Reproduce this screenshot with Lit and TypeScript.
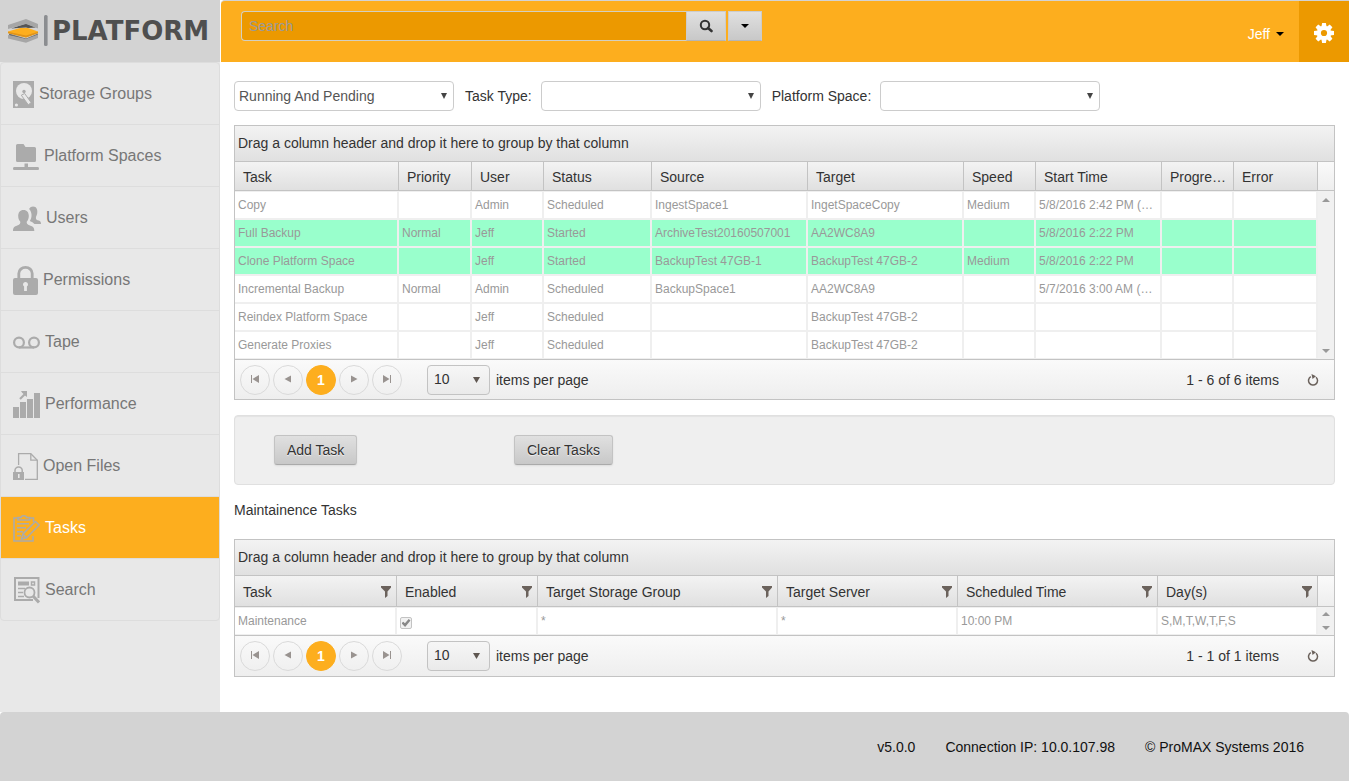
import { LitElement, html, svg, css, nothing } from "lit";
import { customElement, property } from "lit/decorators.js";
import { classMap } from "lit/directives/class-map.js";
import { styleMap } from "lit/directives/style-map.js";

interface NavItem {
  label: string;
  width: number;
  icon: unknown;
  active?: boolean;
}

interface Column {
  title: string;
  /** Width in pixels; the column without one takes the remaining space. */
  width?: number;
}

interface Row {
  cells: (string | boolean)[];
  running?: boolean;
}

const NAV: NavItem[] = [
  {
    label: "Storage Groups",
    width: 21,
    icon: svg`
      <rect x="0" y="3" width="21" height="27" fill="#ababab"/>
      <circle cx="11" cy="13" r="8" fill="#e8e8e8"/>
      <circle cx="11" cy="13.500" r="1.700" fill="#ababab"/>
      <path d="M8.300 17.200l3.400-1.700 6.300 8.900-2.600 2.600z" fill="#e8e8e8" stroke="#ababab" stroke-width="1"/>
      <circle cx="3.400" cy="27" r="1.600" fill="#e8e8e8"/>`,
  },
  {
    label: "Platform Spaces",
    width: 26,
    icon: svg`
      <path d="M3 5.500q0-1.500 1.500-1.500h6l2 3H21.500q1.500 0 1.500 1.500v12q0 1.500-1.500 1.500H4.500q-1.500 0-1.500-1.500z" fill="#ababab"/>
      <path d="M11.500 23.500h3.500v3.500h10q1 0 1 1.500t-1 1.500H1q-1 0-1-1.500T1 27h10.500z" fill="#ababab"/>`,
  },
  {
    label: "Users",
    width: 28,
    icon: svg`
      <path d="M16 7q1.500-2.400 4-2.400c3.800 0 4.800 3.400 4.200 7-.4 2-1.300 3-1.300 4.300 0 1.500 1 2 2.900 2.700 1.600.6 2.200 1.500 2.200 3.400h-6.500q-1.800-2.200-4.700-3c2.700-3.600 2.200-9.400-.8-12z" fill="#ababab"/>
      <path d="M10.500 8c3.600 0 5.300 2.600 5.300 6 0 2.600-.9 4.500-2 5.600-.4 2.100.2 2.900 3.200 3.900 2.900 1 4.300 1.900 4.300 5.500H0c0-3.600 1.300-4.500 4.200-5.500 2.900-1 3.400-1.800 3-3.900-1.200-1.200-2-3.100-2-5.600 0-3.400 1.700-6 5.300-6z" fill="#ababab"/>`,
  },
  {
    label: "Permissions",
    width: 25,
    icon: svg`
      <path d="M5.800 15V9.500a6.700 6.200 0 0 1 13.400 0V15" fill="none" stroke="#ababab" stroke-width="2.800"/>
      <rect x="0" y="14" width="25" height="17" rx="2" fill="#ababab"/>
      <path d="M12.500 18a2.500 2.500 0 0 1 1.400 4.600v4.400h-2.800v-4.400A2.500 2.500 0 0 1 12.500 18z" fill="#e8e8e8"/>`,
  },
  {
    label: "Tape",
    width: 27,
    icon: svg`
      <g fill="none" stroke="#ababab" stroke-width="2.200">
        <circle cx="6" cy="16.500" r="4.900"/>
        <circle cx="21" cy="16.500" r="4.900"/>
        <path d="M6 21.500h15"/>
      </g>`,
  },
  {
    label: "Performance",
    width: 27,
    icon: svg`
      <path d="M0 19h6v11H0zM7 14h6v16H7zM14 11h6v19h-6zM21 5h6v25h-6z" fill="#ababab"/>
      <path d="M7 11l5.500-5.500" fill="none" stroke="#ababab" stroke-width="2.200"/>
      <path d="M8 3h6v6l-2-1.500-3-3z" fill="#ababab"/>`,
  },
  {
    label: "Open Files",
    width: 25,
    icon: svg`
      <g fill="none" stroke="#ababab" stroke-width="1.300">
        <path d="M5.600 15V3.700h12.200l6.500 6.500v19.200H12"/>
        <path d="M17.800 3.700v6.500h6.500"/>
        <path d="M2 22.500v-2.200a3.600 3.300 0 0 1 7.200 0v2.200" stroke-width="1.500"/>
      </g>
      <rect x="0" y="22" width="11" height="8" fill="#ababab"/>
      <path d="M5 24h1.600v4H5z" fill="#e8e8e8"/>`,
  },
  {
    label: "Tasks",
    width: 27,
    active: true,
    icon: svg`
      <g fill="none" stroke="#ababab" stroke-width="1.600">
        <path d="M5 6H1v23h19v-5M16.500 6H20.500v4"/>
        <path d="M5 8V5.500h3q0-1.800 2.800-1.800t2.800 1.800h3V8z"/>
        <path d="M4 11.800h12M4 15.800h9M4 19.800h6M4 23.800h4"/>
        <path d="M8.500 27l1.500-5L22.500 9.500l3.700 3.500L13.500 25.700zM10 22l3.500 3.700"/>
      </g>`,
  },
  {
    label: "Search",
    width: 27,
    icon: svg`
      <path d="M20 26H2V4h23.500v20" fill="none" stroke="#ababab" stroke-width="2"/>
      <path d="M5 7.500h11v4H5z" fill="#ababab"/>
      <g fill="none" stroke="#ababab" stroke-width="1.500">
        <path d="M18.500 8h3v3h-3zM5 14.500h7M5 18.500h5M5 22.500h6"/>
        <circle cx="16.500" cy="18.500" r="5" stroke-width="1.800"/>
      </g>
      <path d="M20 22l6 6.500" stroke="#ababab" stroke-width="3"/>`,
  },
];

const TASK_COLUMNS: Column[] = [
  { title: "Task" },
  { title: "Priority", width: 73 },
  { title: "User", width: 72 },
  { title: "Status", width: 108 },
  { title: "Source", width: 156 },
  { title: "Target", width: 156 },
  { title: "Speed", width: 72 },
  { title: "Start Time", width: 126 },
  { title: "Progre…", width: 72 },
  { title: "Error", width: 84 },
];

const TASK_ROWS: Row[] = [
  { cells: ["Copy", "", "Admin", "Scheduled", "IngestSpace1", "IngetSpaceCopy", "Medium", "5/8/2016 2:42 PM (…", "", ""] },
  { cells: ["Full Backup", "Normal", "Jeff", "Started", "ArchiveTest20160507001", "AA2WC8A9", "", "5/8/2016 2:22 PM", "", ""], running: true },
  { cells: ["Clone Platform Space", "", "Jeff", "Started", "BackupTest 47GB-1", "BackupTest 47GB-2", "Medium", "5/8/2016 2:22 PM", "", ""], running: true },
  { cells: ["Incremental Backup", "Normal", "Admin", "Scheduled", "BackupSpace1", "AA2WC8A9", "", "5/7/2016 3:00 AM (…", "", ""] },
  { cells: ["Reindex Platform Space", "", "Jeff", "Scheduled", "", "BackupTest 47GB-2", "", "", "", ""] },
  { cells: ["Generate Proxies", "", "Jeff", "Scheduled", "", "BackupTest 47GB-2", "", "", "", ""] },
];

const MAINTENANCE_COLUMNS: Column[] = [
  { title: "Task", width: 162 },
  { title: "Enabled", width: 141 },
  { title: "Target Storage Group" },
  { title: "Target Server", width: 180 },
  { title: "Scheduled Time", width: 200 },
  { title: "Day(s)", width: 160 },
];

const MAINTENANCE_ROWS: Row[] = [
  { cells: ["Maintenance", true, "*", "*", "10:00 PM", "S,M,T,W,T,F,S"] },
];

const base = css`
  * {
    box-sizing: border-box;
  }
  button,
  input,
  select {
    font: inherit;
    margin: 0;
  }
  svg {
    display: block;
    flex: none;
  }
`;

@customElement("data-grid")
export class DataGrid extends LitElement {
  @property({ attribute: false }) columns: Column[] = [];
  @property({ attribute: false }) rows: Row[] = [];
  @property({ type: Boolean }) filterable = false;

  static styles = [
    base,
    css`
      :host {
        display: block;
        border: 1px solid #c3c3c3;
        color: #333;
      }
      .grouping {
        height: 36px;
        padding: 0 3px;
        line-height: 34px;
        border-bottom: 1px solid #c3c3c3;
        background: linear-gradient(#f3f3f3, #e0e0e0);
      }
      .content {
        display: grid;
        grid-template-columns: minmax(0, 1fr) 16px;
      }
      table {
        width: 100%;
        table-layout: fixed;
        border-collapse: separate;
        border-spacing: 0;
      }
      th,
      td {
        text-align: left;
        font-weight: normal;
        white-space: nowrap;
        overflow: hidden;
        text-overflow: ellipsis;
      }
      th {
        height: 29px;
        padding: 2px 4px 0 8px;
        border-right: 1px solid #c3c3c3;
        border-bottom: 1px solid #c3c3c3;
        background: linear-gradient(#f3f3f3, #e0e0e0);
      }
      .filterable th {
        height: 31px;
      }
      .heading {
        display: flex;
        align-items: center;
        justify-content: space-between;
      }
      .filter {
        border: 0;
        padding: 0;
        background: none;
      }
      td {
        height: 28px;
        padding: 0 3px;
        font-size: 12px;
        color: #999;
        background: #fff;
        border: solid #efefef;
        border-width: 1px 2px 1px 0;
      }
      .running td {
        background: #9fc;
      }
      .check {
        appearance: none;
        display: grid;
        place-items: center;
        width: 12px;
        height: 12px;
        margin-top: 4px;
        border: 1px solid #c3c3c3;
        border-radius: 2px;
        background: #f1f1f1;
      }
      .check:checked::before {
        content: "";
        width: 9px;
        height: 8px;
        background: #888;
        clip-path: polygon(0 52%, 20% 35%, 38% 52%, 80% 0, 100% 18%, 40% 100%);
      }
      .gutter {
        display: flex;
        flex-direction: column;
        background: #f1f1f1;
      }
      .cap {
        height: 29px;
        border-bottom: 1px solid #c3c3c3;
        background: linear-gradient(#fafafa, #eee);
      }
      .filterable .cap {
        height: 31px;
      }
      .track {
        flex: 1;
        contain: size;
        display: flex;
        flex-direction: column;
        justify-content: space-between;
      }
      .step {
        flex: 0 1 17px;
        min-height: 0;
        display: grid;
        place-items: center;
        padding: 0;
        border: 0;
        background: none;
      }
      .pager {
        display: flex;
        align-items: center;
        height: 40px;
        padding: 0 15px 0 5px;
        border-top: 1px solid #c3c3c3;
        background: linear-gradient(#fafafa, #eee);
      }
      .filterable + .pager {
        height: 41px;
      }
      .pages {
        display: flex;
        gap: 3px;
      }
      .page {
        display: grid;
        place-items: center;
        width: 30px;
        height: 30px;
        padding: 0;
        border: 1px solid #dadada;
        border-radius: 50%;
        background: none;
      }
      .current {
        border-color: #fdae1e;
        background: #fdae1e;
        color: #fff;
        font-weight: bold;
      }
      .size {
        display: flex;
        align-items: center;
        gap: 6px;
        margin-left: 25px;
      }
      .picker {
        display: grid;
        align-items: center;
        width: 63px;
      }
      .picker > * {
        grid-area: 1 / 1;
      }
      .picker svg {
        justify-self: end;
        margin-right: 10px;
        pointer-events: none;
      }
      .picker select {
        appearance: none;
        height: 30px;
        padding: 0 6px 2px;
        border: 1px solid #c3c3c3;
        border-radius: 4px;
        background: linear-gradient(#f6f6f6, #eaeaea);
        color: #333;
      }
      .summary {
        margin-left: auto;
      }
      .refresh {
        margin-left: 28px;
        padding: 0;
        border: 0;
        background: none;
      }
    `,
  ];

  private cell(value: string | boolean) {
    return typeof value === "boolean"
      ? html`<input class="check" type="checkbox" aria-label="Enabled" .checked=${value} disabled />`
      : value;
  }

  private pageButton(label: string, shape: string) {
    return html`<button class="page" aria-label=${label}>
      <svg width="10" height="12" viewBox="0 0 10 12"><path d=${shape} fill="#999390" /></svg>
    </button>`;
  }

  render() {
    const count = this.rows.length;
    return html`
      <div class="grouping">Drag a column header and drop it here to group by that column</div>
      <div class=${classMap({ content: true, filterable: this.filterable })}>
        <table>
          <colgroup>
            ${this.columns.map(
              (c) => html`<col style=${styleMap({ width: c.width ? `${c.width}px` : "auto" })} />`
            )}
          </colgroup>
          <thead>
            <tr>
              ${this.columns.map((c) =>
                this.filterable
                  ? html`<th scope="col">
                      <div class="heading">
                        ${c.title}
                        <button class="filter" aria-label="Filter ${c.title}">
                          <svg width="12" height="12" viewBox="0 0 12 12">
                            <path d="M1 0h10v1.500L7.500 5.500V10L5 12V5.500L1 1.500z" fill="#6b625c" />
                          </svg>
                        </button>
                      </div>
                    </th>`
                  : html`<th scope="col">${c.title}</th>`
              )}
            </tr>
          </thead>
          <tbody>
            ${this.rows.map(
              (r) => html`<tr class=${r.running ? "running" : nothing}>
                ${r.cells.map((v) => html`<td>${this.cell(v)}</td>`)}
              </tr>`
            )}
          </tbody>
        </table>
        <div class="gutter">
          <div class="cap"></div>
          <div class="track">
            <button class="step" aria-label="Scroll up">
              <svg width="8" height="4" viewBox="0 0 8 4"><path d="M0 4L4 0L8 4z" fill="#999" /></svg>
            </button>
            <button class="step" aria-label="Scroll down">
              <svg width="8" height="4" viewBox="0 0 8 4"><path d="M0 0L4 4L8 0z" fill="#999" /></svg>
            </button>
          </div>
        </div>
      </div>
      <div class="pager">
        <div class="pages">
          ${this.pageButton("First page", "M1 1h1v8H1zM9 1v8L2.500 5z")}
          ${this.pageButton("Previous page", "M8 1.500v7L1.500 5z")}
          <button class="page current">1</button>
          ${this.pageButton("Next page", "M2 1.500v7L8.500 5z")}
          ${this.pageButton("Last page", "M8 1h1v8H8zM1 1v8L7.500 5z")}
        </div>
        <label class="size">
          <span class="picker">
            <select>
              <option>10</option>
            </select>
            <svg width="8" height="6" viewBox="0 0 8 6"><path d="M1 0h7L4.500 6z" fill="#5f5751" /></svg>
          </span>
          items per page
        </label>
        <span class="summary">1 - ${count} of ${count} items</span>
        <button class="refresh" aria-label="Refresh">
          <svg width="12" height="12" viewBox="0 0 12 12">
            <path d="M9 3.200a4.500 4.500 0 1 1-5.200-.5" fill="none" stroke="#6b625c" stroke-width="1.500" />
            <path d="M4.500 0l4.500 2.200L5.500 5z" fill="#6b625c" />
          </svg>
        </button>
      </div>
    `;
  }
}

@customElement("app-root")
export class AppRoot extends LitElement {
  static styles = [
    base,
    css`
      :host {
        display: flex;
        flex-direction: column;
        min-height: 100vh;
        background: #fff;
        color: #333;
        font: 14px/20px "Liberation Sans", Arial, sans-serif;
      }
      .shell {
        flex: 1;
        display: grid;
        grid-template-columns: 220px minmax(0, 1fr);
        grid-template-rows: auto 1fr;
      }
      .brand {
        display: flex;
        align-items: center;
        gap: 4px;
        height: 62px;
        padding-left: 8px;
        background: #d3d3d3;
        color: #4f4f4f;
        font: bold 26px/30px "DejaVu Sans", sans-serif;
      }
      .topbar {
        display: flex;
        align-items: stretch;
        height: 62px;
        margin-left: 1px;
        padding-left: 20px;
        border-top: 1px solid #d3d3d3;
        border-top-left-radius: 4px;
        background: #fdae1e;
      }
      .search {
        display: flex;
        width: 521px;
        height: 30px;
        margin-top: 10px;
      }
      .search input {
        flex: 1;
        min-width: 0;
        padding: 0 7px;
        border: 1px solid #d3cfc0;
        border-right: 0;
        border-radius: 4px 0 0 4px;
        background: #ec9900;
        color: #fff;
        outline: 0;
      }
      .search input::placeholder {
        color: #999;
      }
      .search button {
        display: grid;
        place-items: center;
        padding: 0;
        border: 1px solid #ccc;
        border-bottom-color: #b5b5b5;
        background: linear-gradient(#e0e0e0, #c8c8c8);
      }
      .go {
        width: 40px;
      }
      .scope {
        width: 34px;
        margin-left: 2px;
      }
      .user {
        display: flex;
        align-items: center;
        gap: 6px;
        margin-left: auto;
        padding: 4px 15px 0 0;
        border: 0;
        background: none;
        color: #fff;
      }
      .settings {
        display: grid;
        place-items: center;
        width: 50px;
        padding: 2px 0 0;
        border: 0;
        background: #ec9900;
      }
      .sidebar {
        background: #e8e8e8;
      }
      .menu {
        margin: 0;
        padding: 0;
        list-style: none;
        border: 1px solid #ddd;
        border-radius: 4px;
      }
      .menu li + li {
        border-top: 1px solid #ddd;
      }
      .menu a {
        display: flex;
        align-items: center;
        gap: 5px;
        height: 61px;
        padding-left: 12px;
        color: #777;
        font-size: 16px;
        text-decoration: none;
      }
      .menu .active {
        background: #fdae1e;
        color: #fff;
      }
      main {
        padding: 19px 14px 34px;
      }
      .filters {
        display: flex;
        align-items: center;
        gap: 11px;
        margin-bottom: 14px;
      }
      .field {
        display: flex;
        align-items: center;
        gap: 9px;
      }
      .picker {
        display: grid;
        align-items: center;
        width: 220px;
      }
      .picker > * {
        grid-area: 1 / 1;
      }
      .picker svg {
        justify-self: end;
        margin-right: 6px;
        pointer-events: none;
      }
      .picker select {
        appearance: none;
        height: 30px;
        padding: 0 4px;
        border: 1px solid #ccc;
        border-radius: 4px;
        background: #fff;
        color: #555;
      }
      .well {
        display: grid;
        grid-template-columns: 240px auto;
        justify-content: start;
        justify-items: start;
        margin: 15px 0;
        padding: 19px 39px;
        border: 1px solid #e0e0e0;
        border-radius: 4px;
        background: #efefef;
        box-shadow: inset 0 1px 1px rgba(0, 0, 0, 0.05);
      }
      .action {
        height: 30px;
        padding: 0 12px;
        border: 1px solid #c3c3c3;
        border-bottom-color: #aaa;
        border-radius: 3px;
        background: linear-gradient(#e0e0e0, #c8c8c8);
        color: #333;
        box-shadow: 0 1px 2px rgba(0, 0, 0, 0.08);
        text-shadow: 0 1px 1px rgba(255, 255, 255, 0.75);
      }
      h2 {
        margin: 0 0 19px;
        font-size: 14px;
        font-weight: normal;
      }
      footer {
        display: flex;
        align-items: center;
        justify-content: flex-end;
        gap: 30px;
        height: 69px;
        padding-right: 45px;
        border-radius: 4px 4px 0 0;
        background: #d3d3d3;
        color: #111;
      }
    `,
  ];

  private picker(id: string, value: string, label?: string) {
    return html`<span class="picker">
      <select id=${id} aria-label=${label ?? nothing}>
        <option>${value}</option>
      </select>
      <svg width="8" height="6" viewBox="0 0 8 6"><path d="M1 0h6L4 6z" fill="#444" /></svg>
    </span>`;
  }

  private caret() {
    return html`<svg width="8" height="4" viewBox="0 0 8 4"><path d="M0 0h8L4 4z" fill="#000" /></svg>`;
  }

  render() {
    return html`
      <div class="shell">
        <div class="brand">
          <svg width="40" height="32" viewBox="0 0 40 32">
            <path d="M1 18.500l17 5 12-5v2l-12 4-17-4z" fill="#707070" />
            <path d="M0 20l18 4 12-4.500V23l-12 4.800L0 23.500z" fill="#a6a6a6" />
            <path d="M0 16.500l12-3.500h8l10 3.500v1.500l-12 4.500L0 18z" fill="#fdae1e" />
            <path d="M0 16.800l18 3.700 12-3.700v1.400l-12 4.300L0 18.200z" fill="#e0941a" />
            <path d="M3 13.500L18 8.500l10 4-8 .5-2-.5z" fill="#555" />
            <path d="M0 10L18 4l12 5v4.500L18 9 0 14z" fill="#a6a6a6" />
            <rect x="36" y="0" width="3.600" height="31" rx="1.500" fill="#8b8d90" />
          </svg>
          PLATFORM
        </div>
        <header class="topbar">
          <div class="search">
            <input type="text" placeholder="Search" aria-label="Search" />
            <button class="go" aria-label="Run search">
              <svg width="14" height="14" viewBox="0 0 14 14">
                <circle cx="6" cy="6" r="4.200" fill="none" stroke="#333" stroke-width="2" />
                <path d="M9 9l3.500 3" stroke="#333" stroke-width="2.600" stroke-linecap="round" />
              </svg>
            </button>
            <button class="scope" aria-label="Search options">${this.caret()}</button>
          </div>
          <button class="user">Jeff ${this.caret()}</button>
          <button class="settings" aria-label="Settings">
            <svg width="20" height="20" viewBox="-10 -10 20 20">
              <g fill="#fff">
                ${[0, 45, 90, 135].map(
                  (a) => svg`<path transform="rotate(${a})" d="M-2.600-6L-1.900-10h3.800L2.600-6V6L1.900 10h-3.800L-2.600 6z"/>`
                )}
                <circle r="7.200" />
              </g>
              <circle r="3.100" fill="#ec9900" />
            </svg>
          </button>
        </header>
        <nav class="sidebar" aria-label="Main">
          <ul class="menu">
            ${NAV.map(
              (n) => html`<li>
                <a class=${n.active ? "active" : nothing} href="#">
                  <svg width=${n.width} height="31" viewBox="0 0 ${n.width} 31">${n.icon}</svg>
                  ${n.label}
                </a>
              </li>`
            )}
          </ul>
        </nav>
        <main>
          <div class="filters">
            ${this.picker("state", "Running And Pending", "Task state")}
            <div class="field">
              <label for="type">Task Type:</label>
              ${this.picker("type", "")}
            </div>
            <div class="field">
              <label for="space">Platform Space:</label>
              ${this.picker("space", "")}
            </div>
          </div>
          <data-grid .columns=${TASK_COLUMNS} .rows=${TASK_ROWS}></data-grid>
          <div class="well">
            <button class="action">Add Task</button>
            <button class="action">Clear Tasks</button>
          </div>
          <h2>Maintainence Tasks</h2>
          <data-grid .columns=${MAINTENANCE_COLUMNS} .rows=${MAINTENANCE_ROWS} filterable></data-grid>
        </main>
      </div>
      <footer>
        <span>v5.0.0</span>
        <span>Connection IP: 10.0.107.98</span>
        <span>© ProMAX Systems 2016</span>
      </footer>
    `;
  }
}
